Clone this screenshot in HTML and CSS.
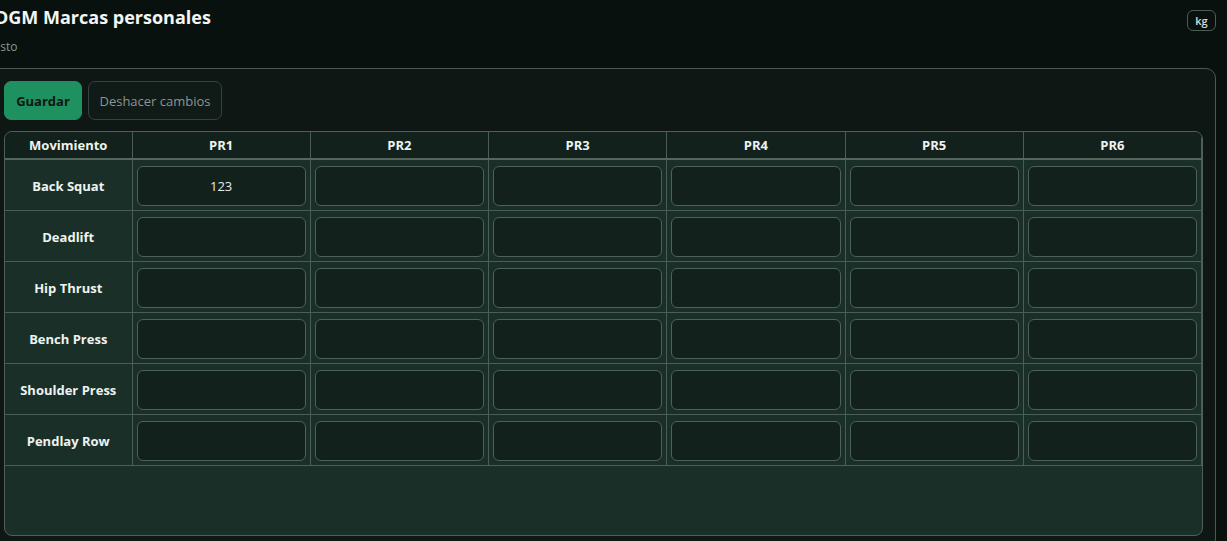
FILE: index.html
```html
<!DOCTYPE html>
<html lang="es">
<head>
<meta charset="utf-8">
<title>DGM Marcas personales</title>
<link rel="stylesheet" href="styles.css">
</head>
<body>
<div class="page">
  <header class="top">
    <div class="heading">
      <h1 class="title">DGM Marcas personales</h1>
      <div class="status">Listo</div>
    </div>
    <button class="unit">kg</button>
  </header>
  <section class="card">
    <div class="actions">
      <button class="btn btn-primary">Guardar</button>
      <button class="btn btn-ghost">Deshacer cambios</button>
    </div>
    <div class="table-wrap">
      <table class="grid">
        <colgroup><col class="col-move"><col><col><col><col><col><col></colgroup>
        <thead>
          <tr><th>Movimiento</th><th>PR1</th><th>PR2</th><th>PR3</th><th>PR4</th><th>PR5</th><th>PR6</th></tr>
        </thead>
        <tbody>
          <tr><th class="move">Back Squat</th><td><input class="cell" value="123"></td><td><input class="cell"></td><td><input class="cell"></td><td><input class="cell"></td><td><input class="cell"></td><td><input class="cell"></td></tr>
          <tr><th class="move">Deadlift</th><td><input class="cell"></td><td><input class="cell"></td><td><input class="cell"></td><td><input class="cell"></td><td><input class="cell"></td><td><input class="cell"></td></tr>
          <tr><th class="move">Hip Thrust</th><td><input class="cell"></td><td><input class="cell"></td><td><input class="cell"></td><td><input class="cell"></td><td><input class="cell"></td><td><input class="cell"></td></tr>
          <tr><th class="move">Bench Press</th><td><input class="cell"></td><td><input class="cell"></td><td><input class="cell"></td><td><input class="cell"></td><td><input class="cell"></td><td><input class="cell"></td></tr>
          <tr><th class="move">Shoulder Press</th><td><input class="cell"></td><td><input class="cell"></td><td><input class="cell"></td><td><input class="cell"></td><td><input class="cell"></td><td><input class="cell"></td></tr>
          <tr><th class="move">Pendlay Row</th><td><input class="cell"></td><td><input class="cell"></td><td><input class="cell"></td><td><input class="cell"></td><td><input class="cell"></td><td><input class="cell"></td></tr>
        </tbody>
      </table>
    </div>
  </section>
</div>
</body>
</html>
```

FILE: styles.css
```css
html, body {
  margin: 0;
  padding: 0;
  background: #09110e;
  overflow: hidden;
}
body {
  font-family: "Open Sans", "Noto Sans", "DejaVu Sans", sans-serif;
  color: #eef3f0;
}
.page {
  margin-left: -9px;
  width: 1225px;
  padding-top: 5px;
}
.top {
  display: flex;
  justify-content: space-between;
  align-items: flex-start;
}
.title {
  margin: 0 0 0 4px;
  font-size: 18px;
  line-height: 24px;
  font-weight: 700;
  color: #f2f6f4;
}
.status {
  margin-top: 10px;
  font-size: 12px;
  line-height: 16px;
  color: #8a9590;
}
.unit {
  margin-top: 5px;
  height: 21px;
  width: 29px;
  padding: 0;
  border: 1px solid #4b5b55;
  border-radius: 6px;
  background: transparent;
  color: #d6e0db;
  font-family: inherit;
  font-size: 11px;
  font-weight: 600;
}
.card {
  margin-top: 13px;
  border: 1px solid #4a5a53;
  border-radius: 10px;
  background: #0e1714;
  padding: 12px;
}
.actions {
  display: flex;
  gap: 6px;
}
.btn {
  height: 39px;
  border-radius: 7px;
  font-family: inherit;
  font-size: 13px;
  padding: 0;
  white-space: nowrap;
}
.btn-primary {
  background: #1f9060;
  border: 1px solid #1f9060;
  color: #0c1812;
  font-weight: 700;
  width: 78px;
}
.btn-ghost {
  background: #101a17;
  border: 1px solid #35433e;
  color: #8b9691;
  width: 134px;
}
.table-wrap {
  margin-top: 11px;
  height: 405px;
  box-sizing: border-box;
  border: 1px solid #4d6159;
  border-radius: 8px;
  background: #1b2f29;
  overflow: hidden;
}
.grid {
  width: 100%;
  border-collapse: collapse;
  table-layout: fixed;
}
.col-move {
  width: 127px;
}
.grid th,
.grid td {
  border: 1px solid #4a5e56;
  padding: 5px 4px 4px;
  text-align: center;
}
.grid tr:first-child th,
.grid tr:first-child td {
  border-top: none;
}
.grid th:first-child,
.grid td:first-child {
  border-left: none;
}
.grid thead th {
  background: #13211c;
  line-height: 17px;
  padding: 5px 4px 4px;
  font-size: 13px;
  font-weight: 700;
  color: #eef3f0;
  border-bottom: 2px solid #53675f;
}
.grid .move {
  background: #1b2f29;
  font-size: 13px;
  font-weight: 700;
  color: #eef3f0;
  height: 41px;
}
.grid td {
  background: #1b2f29;
}
.cell {
  display: block;
  width: 100%;
  height: 40px;
  box-sizing: border-box;
  border: 1px solid #4d6159;
  border-radius: 6px;
  background: #13211c;
  color: #e6ece9;
  font-family: inherit;
  font-size: 13px;
  text-align: center;
  outline: none;
}
```
